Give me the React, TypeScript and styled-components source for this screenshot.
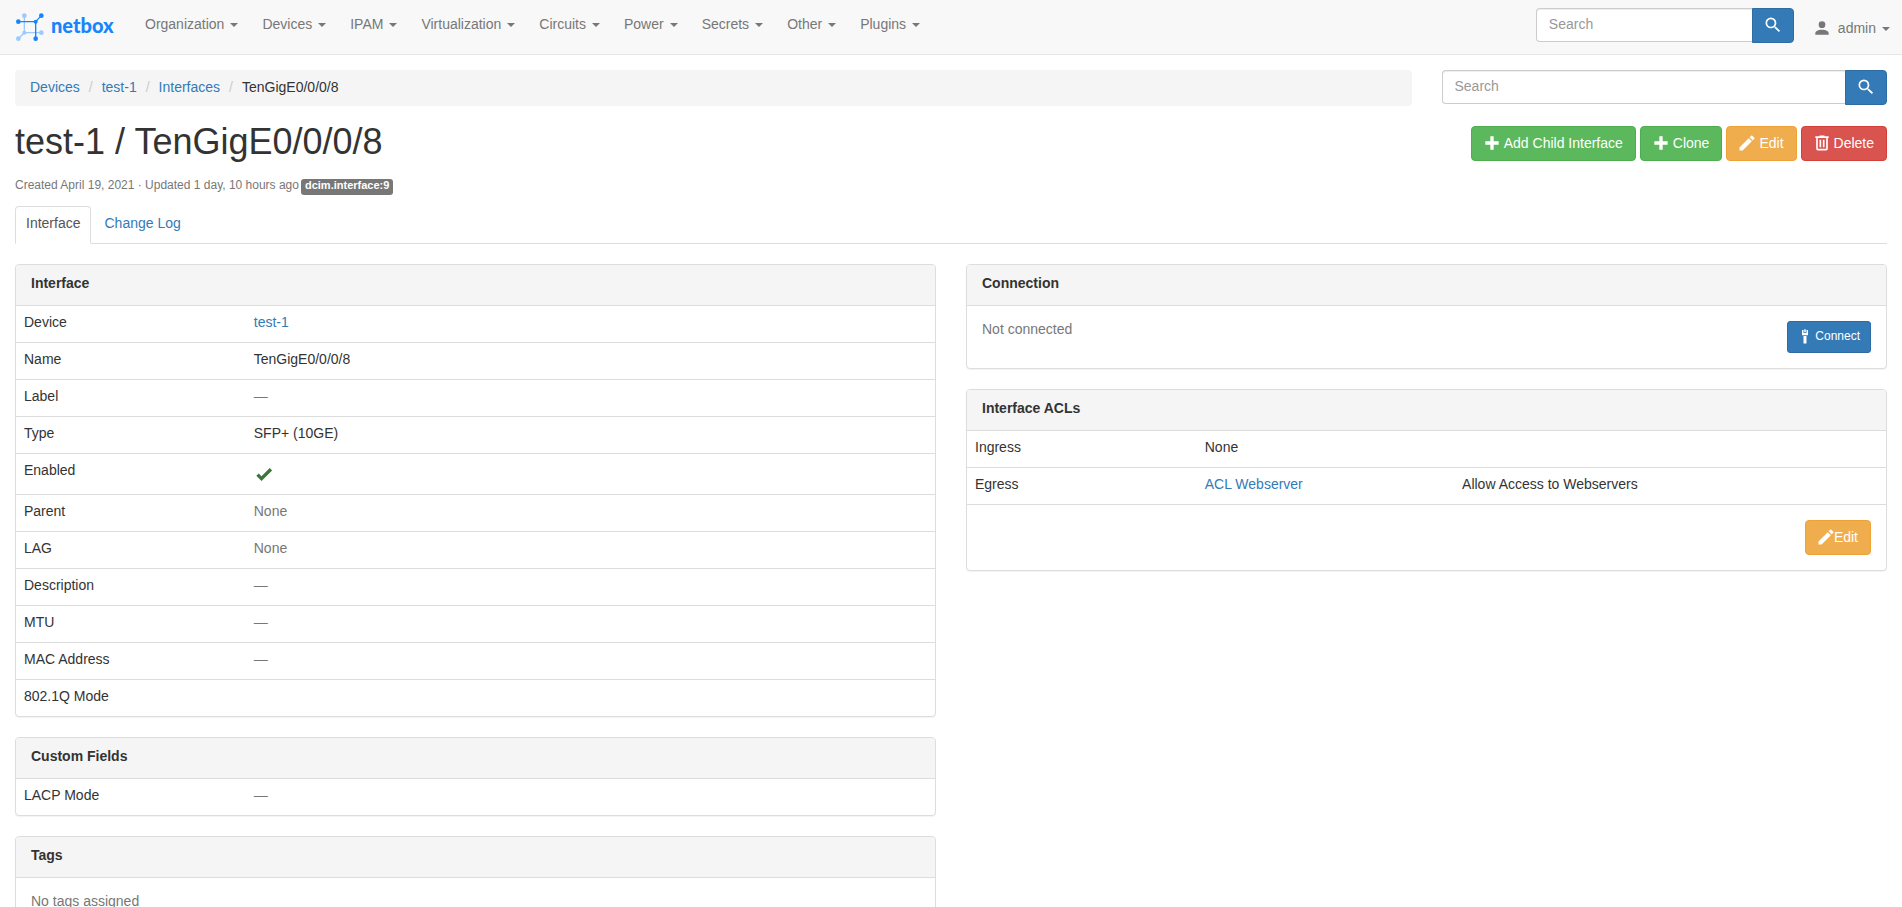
import React from 'react';
import styled, { createGlobalStyle, css } from 'styled-components';

const color = {
  text: '#333',
  muted: '#777',
  link: '#337ab7',
  line: '#ddd',
  shade: '#f5f5f5',
};

const GlobalStyle = createGlobalStyle`
  *, *::before, *::after { box-sizing: border-box; }
  body {
    margin: 0;
    background: #fff;
    color: ${color.text};
    font-family: "Liberation Sans", Arial, Helvetica, sans-serif;
    font-size: 14px;
    line-height: 20px;
  }
  button, input { font: inherit; }
  a { color: ${color.link}; text-decoration: none; }
  ul, ol { margin: 0; padding: 0; list-style: none; }
`;

/* ---------- icons ---------- */

const icons = {
  plus: 'M20 14H14V20H10V14H4V10H10V4H14V10H20V14Z',
  pencil:
    'M20.71,7.04C21.1,6.65 21.1,6 20.71,5.63L18.37,3.29C18,2.9 17.35,2.9 16.96,3.29L15.12,5.12L18.87,8.87M3,17.25V21H6.75L17.81,9.93L14.06,6.18L3,17.25Z',
  trash:
    'M9,3V4H4V6H5V19A2,2 0 0,0 7,21H17A2,2 0 0,0 19,19V6H20V4H15V3H9M7,6H17V19H7V6M9,8V17H11V8H9M13,8V17H15V8H13Z',
  magnify:
    'M9.5,3A6.5,6.5 0 0,1 16,9.5C16,11.11 15.41,12.59 14.44,13.73L14.71,14H15.5L20.5,19L19,20.5L14,15.5V14.71L13.73,14.44C12.59,15.41 11.11,16 9.5,16A6.5,6.5 0 0,1 3,9.5A6.5,6.5 0 0,1 9.5,3M9.5,5C7,5 5,7 5,9.5C5,12 7,14 9.5,14C12,14 14,12 14,9.5C14,7 12,5 9.5,5Z',
  account:
    'M12,4A4,4 0 0,1 16,8A4,4 0 0,1 12,12A4,4 0 0,1 8,8A4,4 0 0,1 12,4M12,14C16.42,14 20,15.79 20,18V20H4V18C4,15.79 7.58,14 12,14Z',
  check: 'M9,20.42L2.79,14.21L5.62,11.38L9,14.77L18.88,4.88L21.71,7.71L9,20.42Z',
  cable: 'M11,3V7H13V3H11M8,4V11H16V4H14V8H10V4H8M10,12V22H14V12H10Z',
};

const Glyph = styled.svg<{ $size: number }>`
  display: block;
  flex: none;
  width: ${(p) => p.$size}px;
  height: ${(p) => p.$size}px;
  fill: currentColor;
`;

function Icon({ name, size = 20, label }: { name: keyof typeof icons; size?: number; label?: string }) {
  return (
    <Glyph $size={size} viewBox="0 0 24 24" role={label ? 'img' : undefined} aria-label={label} aria-hidden={!label}>
      <path d={icons[name]} />
    </Glyph>
  );
}

const Caret = styled.span`
  margin: 2px 0 0 6px;
  border-top: 4px solid currentColor;
  border-left: 4px solid transparent;
  border-right: 4px solid transparent;
`;

/* ---------- buttons and search ---------- */

const tones = {
  primary: ['#337ab7', '#2e6da4'],
  success: ['#5cb85c', '#4cae4c'],
  warning: ['#f0ad4e', '#eea236'],
  danger: ['#d9534f', '#d43f3a'],
};

const Button = styled.button<{ $tone: keyof typeof tones; $small?: boolean; $tight?: boolean }>`
  display: inline-flex;
  align-items: center;
  gap: ${(p) => (p.$tight ? 0 : p.$small ? 3 : 4)}px;
  height: ${(p) => (p.$small ? 32 : 35)}px;
  padding: ${(p) => (p.$small ? '0 10px 2px' : '0 12px 1px')};
  border: 1px solid ${(p) => tones[p.$tone][1]};
  border-radius: ${(p) => (p.$small ? 3 : 4)}px;
  background: ${(p) => tones[p.$tone][0]};
  color: #fff;
  font-size: ${(p) => (p.$small ? 12 : 14)}px;
  line-height: 20px;
  white-space: nowrap;
  cursor: pointer;

  svg { margin: 0 -2px; }
`;

const SearchForm = styled.form<{ $inNav?: boolean }>`
  display: flex;
  align-items: flex-start;
  ${(p) => p.$inNav && css`width: 258px; margin: 8px 18px 0 auto;`}
`;

const SearchInput = styled.input`
  flex: 1;
  min-width: 0;
  height: 34px;
  padding: 5px 12px 7px;
  border: 1px solid #ccc;
  border-right: 0;
  border-radius: 4px 0 0 4px;
  background: #fff;
  box-shadow: inset 0 1px 1px rgba(0, 0, 0, 0.075);
  color: #555;
  &::placeholder { color: #999; opacity: 1; }
`;

const SearchButton = styled(Button)`
  border-radius: 0 4px 4px 0;
`;

function Search({ inNav }: { inNav?: boolean }) {
  return (
    <SearchForm $inNav={inNav} role="search" onSubmit={(e: React.FormEvent) => e.preventDefault()}>
      <SearchInput type="text" placeholder="Search" aria-label={inNav ? 'Search everything' : 'Search interfaces'} />
      <SearchButton $tone="primary" type="submit" aria-label="Search">
        <Icon name="magnify" />
      </SearchButton>
    </SearchForm>
  );
}

/* ---------- navigation bar ---------- */

const Navbar = styled.nav`
  display: flex;
  align-items: flex-start;
  height: 55px;
  border-bottom: 1px solid #e7e7e7;
  background: #f8f8f8;
`;

const Brand = styled.a`
  display: flex;
  align-items: flex-start;
  width: 133px;
  padding: 13px 0 0 15px;
  color: #1685fc;
  font-family: Lato, sans-serif;
  font-size: 20px;
  font-weight: 900;
  line-height: 24px;
  gap: 7px;
`;

const Menu = styled.ul`
  display: flex;
`;

const MenuLink = styled.a<{ $account?: boolean }>`
  display: flex;
  align-items: center;
  padding: ${(p) => (p.$account ? '18px 12px 0 0' : '14px 12px 20px')};
  color: ${color.muted};

  svg { margin-right: 6px; }
`;

function Logo() {
  return (
    <svg width="29" height="29" viewBox="45 39 87 87" aria-hidden="true">
      <g stroke="#9dc9fe" fill="#9dc9fe" strokeWidth="4">
        <path d="M73 47V98H124M73 98L55 116" fill="none" />
        <circle cx="73" cy="47" r="7" stroke="none" />
        <circle cx="73" cy="98" r="6" stroke="none" />
        <circle cx="124" cy="98" r="7" stroke="none" />
        <circle cx="55" cy="116" r="7" stroke="none" />
      </g>
      <g stroke="#1685fc" fill="#1685fc" strokeWidth="4">
        <path d="M55 65H107V116M107 65L124 47" fill="none" />
        <circle cx="55" cy="65" r="7" stroke="none" />
        <circle cx="107" cy="65" r="6" stroke="none" />
        <circle cx="124" cy="47" r="7" stroke="none" />
        <circle cx="107" cy="116" r="7" stroke="none" />
      </g>
    </svg>
  );
}

/* ---------- page header ---------- */

const TopRow = styled.div`
  display: flex;
  padding-top: 15px;
`;

const Column = styled.div<{ $share: number }>`
  width: ${(p) => p.$share}%;
  padding: 0 15px;
`;

const Breadcrumb = styled.ol`
  display: flex;
  padding: 7px 15px 9px;
  border-radius: 4px;
  background: ${color.shade};

  li + li::before {
    content: "/";
    padding: 0 9px;
    color: #ccc;
  }
`;

const Container = styled.div`
  padding: 0 15px;
`;

const TitleRow = styled.header`
  display: flex;
  justify-content: space-between;
  align-items: flex-start;
  margin-top: 16px;
`;

const Title = styled.h1`
  margin: 0;
  font-size: 36px;
  font-weight: 400;
  line-height: 40px;
`;

const Actions = styled.div`
  display: flex;
  gap: 4px;
  padding-top: 4px;
`;

const Meta = styled.p`
  display: flex;
  gap: 2px;
  margin: 14px 0 11px;
  color: ${color.muted};
  font-size: 12px;
  line-height: 18px;
`;

const Badge = styled.span`
  height: 16px;
  margin-top: 3px;
  padding: 0 4px;
  border-radius: 3px;
  background: ${color.muted};
  color: #fff;
  font-size: 11px;
  font-weight: 700;
  line-height: 13px;
`;

const Tabs = styled.ul`
  display: flex;
  gap: 2px;
  margin-bottom: 20px;
  border-bottom: 1px solid ${color.line};
`;

const Tab = styled.a<{ $active?: boolean }>`
  display: block;
  margin-bottom: -1px;
  padding: 6px 10px 10px;
  border: 1px solid transparent;
  border-radius: 4px 4px 0 0;
  ${(p) =>
    p.$active &&
    css`
      border-color: ${color.line};
      border-bottom-color: #fff;
      background: #fff;
      color: #555;
    `}
`;

/* ---------- panels ---------- */

const Content = styled.main`
  display: grid;
  grid-template-columns: 1fr 1fr;
  align-items: start;
  gap: 30px;
`;

const Stack = styled.div`
  display: grid;
  gap: 20px;
  padding-bottom: 20px;
`;

const PanelBox = styled.section`
  border: 1px solid ${color.line};
  border-radius: 4px;
  background: #fff;
  box-shadow: 0 1px 1px rgba(0, 0, 0, 0.05);
`;

const PanelTitle = styled.h2`
  margin: 0;
  padding: 8px 15px 12px;
  border-bottom: 1px solid ${color.line};
  border-radius: 3px 3px 0 0;
  background: ${color.shade};
  font-size: 14px;
  font-weight: 700;
  line-height: 20px;
`;

const PanelBody = styled.div<{ $ruled?: boolean }>`
  display: flex;
  align-items: flex-start;
  justify-content: space-between;
  padding: 15px;
  border-top: ${(p) => (p.$ruled ? `1px solid ${color.line}` : '0')};
`;

const Note = styled.span`
  margin-top: -2px;
  color: ${color.muted};
`;

const Spacer = styled.span`
  flex: 1;
`;

const Table = styled.table`
  width: 100%;
  border-spacing: 0;
  table-layout: fixed;

  th, td {
    padding: 6px 8px 10px;
    font-weight: 400;
    text-align: left;
    vertical-align: top;
  }
  th { width: 25%; }
  tr + tr > * { border-top: 1px solid ${color.line}; }
`;

const MiddleCell = styled.td`
  width: 28%;
`;

const Muted = styled.span`
  color: ${color.muted};
`;

const Enabled = styled.span`
  display: block;
  padding: 4px 0 0;
  color: #3c763d;
`;

function Panel({ title, children }: { title: string; children: React.ReactNode }) {
  return (
    <PanelBox>
      <PanelTitle>{title}</PanelTitle>
      {children}
    </PanelBox>
  );
}

const dash = <Muted>—</Muted>;
const none = <Muted>None</Muted>;

const menus = ['Organization', 'Devices', 'IPAM', 'Virtualization', 'Circuits', 'Power', 'Secrets', 'Other', 'Plugins'];

const attributes: [string, React.ReactNode][] = [
  ['Device', <a href="#device">test-1</a>],
  ['Name', 'TenGigE0/0/0/8'],
  ['Label', dash],
  ['Type', 'SFP+ (10GE)'],
  ['Enabled', <Enabled><Icon name="check" label="Yes" /></Enabled>],
  ['Parent', none],
  ['LAG', none],
  ['Description', dash],
  ['MTU', dash],
  ['MAC Address', dash],
  ['802.1Q Mode', null],
];

function AttributeTable({ rows }: { rows: [string, React.ReactNode][] }) {
  return (
    <Table>
      <tbody>
        {rows.map(([name, value]) => (
          <tr key={name}>
            <th scope="row">{name}</th>
            <td>{value}</td>
          </tr>
        ))}
      </tbody>
    </Table>
  );
}

export default function App() {
  return (
    <>
      <GlobalStyle />
      <Navbar>
        <Brand href="#home">
          <Logo />
          netbox
        </Brand>
        <Menu>
          {menus.map((name) => (
            <li key={name}>
              <MenuLink href={`#${name.toLowerCase()}`}>
                {name}
                <Caret />
              </MenuLink>
            </li>
          ))}
        </Menu>
        <Search inNav />
        <MenuLink href="#account" $account>
          <Icon name="account" />
          admin
          <Caret />
        </MenuLink>
      </Navbar>

      <TopRow>
        <Column $share={75}>
          <Breadcrumb>
            <li><a href="#devices">Devices</a></li>
            <li><a href="#device">test-1</a></li>
            <li><a href="#interfaces">Interfaces</a></li>
            <li>TenGigE0/0/0/8</li>
          </Breadcrumb>
        </Column>
        <Column $share={25}>
          <Search />
        </Column>
      </TopRow>

      <Container>
        <TitleRow>
          <Title>test-1 / TenGigE0/0/0/8</Title>
          <Actions>
            <Button $tone="success" type="button"><Icon name="plus" />Add Child Interface</Button>
            <Button $tone="success" type="button"><Icon name="plus" />Clone</Button>
            <Button $tone="warning" type="button"><Icon name="pencil" />Edit</Button>
            <Button $tone="danger" type="button"><Icon name="trash" />Delete</Button>
          </Actions>
        </TitleRow>
        <Meta>
          Created April 19, 2021 · Updated 1 day, 10 hours ago
          <Badge>dcim.interface:9</Badge>
        </Meta>
        <Tabs>
          <li><Tab href="#interface" $active>Interface</Tab></li>
          <li><Tab href="#changelog">Change Log</Tab></li>
        </Tabs>

        <Content>
          <Stack>
            <Panel title="Interface">
              <AttributeTable rows={attributes} />
            </Panel>
            <Panel title="Custom Fields">
              <AttributeTable rows={[['LACP Mode', dash]]} />
            </Panel>
            <Panel title="Tags">
              <PanelBody><Note>No tags assigned</Note></PanelBody>
            </Panel>
          </Stack>
          <Stack>
            <Panel title="Connection">
              <PanelBody>
                <Note>Not connected</Note>
                <Button $tone="primary" $small type="button"><Icon name="cable" size={18} />Connect</Button>
              </PanelBody>
            </Panel>
            <Panel title="Interface ACLs">
              <Table>
                <tbody>
                  <tr>
                    <th scope="row">Ingress</th>
                    <MiddleCell>None</MiddleCell>
                    <td />
                  </tr>
                  <tr>
                    <th scope="row">Egress</th>
                    <MiddleCell><a href="#acl">ACL Webserver</a></MiddleCell>
                    <td>Allow Access to Webservers</td>
                  </tr>
                </tbody>
              </Table>
              <PanelBody $ruled>
                <Spacer />
                <Button $tone="warning" $tight type="button"><Icon name="pencil" />Edit</Button>
              </PanelBody>
            </Panel>
          </Stack>
        </Content>
      </Container>
    </>
  );
}
